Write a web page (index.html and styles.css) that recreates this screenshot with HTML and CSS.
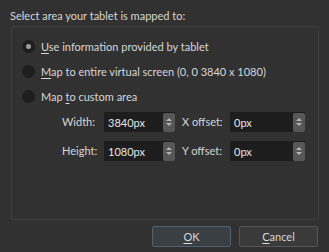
FILE: index.html
```html
<!DOCTYPE html>
<html>
<head>
<meta charset="utf-8">
<link rel="stylesheet" href="styles.css">
</head>
<body>
<div class="dialog">
  <div class="title">Select area your tablet is mapped to:</div>
  <div class="group">
    <label class="radio-row"><span class="radio checked"></span><span><u>U</u>se information provided by tablet</span></label>
    <label class="radio-row"><span class="radio"></span><span><u>M</u>ap to entire virtual screen (0, 0 3840 x 1080)</span></label>
    <label class="radio-row"><span class="radio"></span><span>Map <u>t</u>o custom area</span></label>
    <div class="spin-grid">
      <span class="lbl">Width:</span>
      <div class="spin w1"><span class="val">3840px</span><span class="arrows"><i class="up"></i><i class="down"></i></span></div>
      <span class="lbl lbl2">X offset:</span>
      <div class="spin w2"><span class="val">0px</span><span class="arrows"><i class="up"></i><i class="down"></i></span></div>
      <span class="lbl">Height:</span>
      <div class="spin w1"><span class="val">1080px</span><span class="arrows"><i class="up"></i><i class="down"></i></span></div>
      <span class="lbl lbl2">Y offset:</span>
      <div class="spin w2"><span class="val">0px</span><span class="arrows"><i class="up"></i><i class="down"></i></span></div>
    </div>
  </div>
  <div class="buttons">
    <button class="btn default"><u>O</u>K</button>
    <button class="btn"><u>C</u>ancel</button>
  </div>
</div>
</body>
</html>
```

FILE: styles.css
```css
html, body {
  margin: 0;
  padding: 0;
  background: #313131;
}
body {
  width: 329px;
  height: 252px;
  overflow: hidden;
  font-family: "Lato", sans-serif;
  font-size: 11px;
  color: #d6d6d6;
  white-space: nowrap;
}
u {
  text-decoration: underline;
  text-underline-offset: 2px;
}
.dialog {
  padding: 6px 0 0 0;
}
.title {
  height: 19px;
  line-height: 19px;
  padding-left: 10px;
}
.group {
  margin: 1px 0 0 11px;
  width: 308px;
  height: 194px;
  border: 1px solid #3f3f3f;
  border-radius: 2px;
  padding-top: 6px;
  box-sizing: border-box;
}
.radio-row {
  display: flex;
  align-items: center;
  height: 26px;
  padding-left: 10px;
  gap: 6px;
}
.radio-row:nth-child(2),
.radio-row:nth-child(3) {
  height: 25px;
}
.radio {
  width: 13px;
  height: 13px;
  border-radius: 50%;
  background: #1e1e1e;
  display: flex;
  align-items: center;
  justify-content: center;
}
.radio.checked::after {
  content: "";
  width: 5px;
  height: 5px;
  border-radius: 50%;
  background: #9c9c9c;
}
.spin-grid {
  display: grid;
  grid-template-columns: 42px 71px 55px 75px;
  grid-auto-rows: 20px;
  row-gap: 9px;
  margin: 3px 0 0 50px;
  align-items: center;
}
.lbl {
  line-height: 20px;
}
.lbl2 {
  padding-left: 7px;
}
.spin {
  height: 20px;
  background: #1d1d1d;
  display: flex;
  align-items: center;
  justify-content: space-between;
  box-sizing: border-box;
  padding-left: 4px;
}
.spin .val {
  color: #e4e4e4;
}
.arrows {
  width: 12px;
  height: 19px;
  background: #575757;
  border-radius: 2px;
  display: flex;
  flex-direction: column;
  align-items: center;
  justify-content: center;
  gap: 2px;
}
.arrows i {
  width: 0;
  height: 0;
  border-left: 3px solid transparent;
  border-right: 3px solid transparent;
}
.arrows .up {
  border-bottom: 3px solid #b4b4b4;
}
.arrows .down {
  border-top: 3px solid #b4b4b4;
}
.buttons {
  display: flex;
  justify-content: flex-end;
  gap: 8px;
  margin: 6px 11px 0 0;
}
.btn {
  width: 79px;
  height: 21px;
  font-family: "Lato", sans-serif;
  font-size: 11px;
  color: #d8d8d8;
  background: #3a3a3a;
  border: 1px solid #555555;
  border-radius: 2px;
  padding: 0;
  line-height: 19px;
}
.btn.default {
  background: #3a3f44;
  border-color: #4f6070;
}
```
